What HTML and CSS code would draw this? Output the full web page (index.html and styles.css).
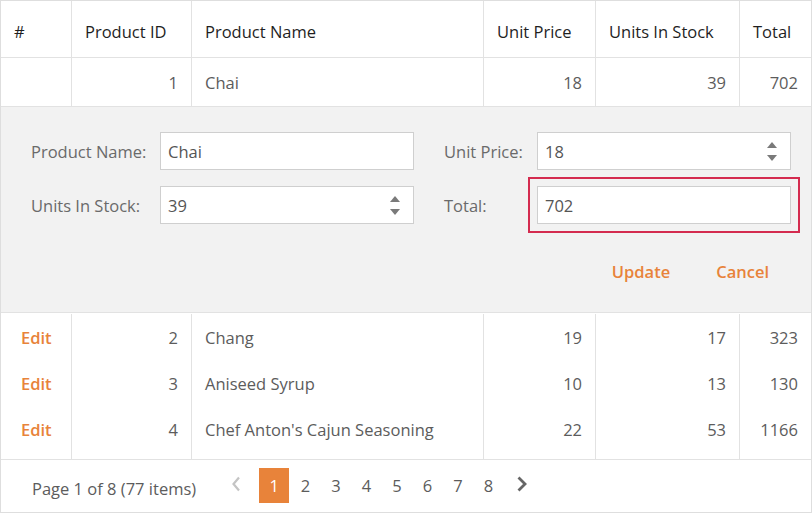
FILE: index.html
```html
<!DOCTYPE html>
<html>
<head>
<meta charset="utf-8">
<link rel="stylesheet" href="styles.css">
</head>
<body>
<div class="grid">
  <div class="row head">
    <div class="cell">#</div>
    <div class="cell">Product ID</div>
    <div class="cell">Product Name</div>
    <div class="cell">Unit Price</div>
    <div class="cell">Units In Stock</div>
    <div class="cell">Total</div>
  </div>
  <div class="row data first">
    <div class="cell"></div>
    <div class="cell num">1</div>
    <div class="cell">Chai</div>
    <div class="cell num">18</div>
    <div class="cell num">39</div>
    <div class="cell num">702</div>
  </div>
  <div class="form">
    <div class="fields">
      <label class="lbl">Product Name:</label>
      <div class="input"><span>Chai</span></div>
      <label class="lbl right">Unit Price:</label>
      <div class="input"><span>18</span><span class="spin"><i class="up"></i><i class="down"></i></span></div>
      <label class="lbl">Units In Stock:</label>
      <div class="input"><span>39</span><span class="spin"><i class="up"></i><i class="down"></i></span></div>
      <label class="lbl right">Total:</label>
      <div class="input focused"><span>702</span></div>
    </div>
    <div class="actions">
      <a class="link">Update</a>
      <a class="link">Cancel</a>
    </div>
  </div>
  <div class="rows">
    <div class="row data">
      <div class="cell"><a class="link">Edit</a></div>
      <div class="cell num">2</div>
      <div class="cell">Chang</div>
      <div class="cell num">19</div>
      <div class="cell num">17</div>
      <div class="cell num">323</div>
    </div>
    <div class="row data">
      <div class="cell"><a class="link">Edit</a></div>
      <div class="cell num">3</div>
      <div class="cell">Aniseed Syrup</div>
      <div class="cell num">10</div>
      <div class="cell num">13</div>
      <div class="cell num">130</div>
    </div>
    <div class="row data last">
      <div class="cell"><a class="link">Edit</a></div>
      <div class="cell num">4</div>
      <div class="cell">Chef Anton's Cajun Seasoning</div>
      <div class="cell num">22</div>
      <div class="cell num">53</div>
      <div class="cell num">1166</div>
    </div>
  </div>
  <div class="pager">
    <span class="info">Page 1 of 8 (77 items)</span>
    <span class="nav prev"><svg width="10" height="16" viewBox="0 0 10 16"><path d="M8 1.5 L2.5 8 L8 14.5" fill="none" stroke="#c4c4c4" stroke-width="2.2"/></svg></span>
    <span class="page current">1</span>
    <span class="page">2</span>
    <span class="page">3</span>
    <span class="page">4</span>
    <span class="page">5</span>
    <span class="page">6</span>
    <span class="page">7</span>
    <span class="page">8</span>
    <span class="nav next"><svg width="12" height="16" viewBox="0 0 12 16"><path d="M2.5 1.5 L9 8 L2.5 14.5" fill="none" stroke="#666" stroke-width="2.8"/></svg></span>
  </div>
</div>
</body>
</html>
```

FILE: styles.css
```css
* { box-sizing: border-box; }
html, body { margin: 0; padding: 0; background: #fff; }
body {
  font-family: "Open Sans", "Noto Sans", sans-serif;
  font-size: 16.5px;
  color: #5c5c5c;
}
.grid {
  width: 812px;
  border: 1px solid #dedede;
}
.row {
  display: grid;
  grid-template-columns: 70px 120px 292px 112px 144px 1fr;
}
.cell {
  display: flex;
  align-items: center;
  padding: 0 13px;
  border-left: 1px solid #e2e2e2;
  white-space: nowrap;
}
.cell:first-child { border-left: none; }
.head {
  height: 57px;
  border-bottom: 1px solid #e2e2e2;
}
.head .cell {
  color: #1f1f1f;
  padding-top: 4px;
}
.data.first {
  height: 48px;
}
.data.first .cell { padding-top: 1px; }
.num { justify-content: flex-end; }
.form {
  background: #f2f2f2;
  border-top: 1px solid #e2e2e2;
  border-bottom: 1px solid #e2e2e2;
  height: 207px;
  padding: 25px 20px 0 30px;
}
.fields {
  display: grid;
  grid-template-columns: 129px 254px 123px 254px;
  row-gap: 16px;
  align-items: center;
}
.lbl { color: #6a6a6a; }
.lbl.right { padding-left: 30px; }
.input {
  height: 38px;
  background: #fff;
  border: 1px solid #cfcfcf;
  display: flex;
  align-items: center;
  justify-content: space-between;
  padding: 0 13px 0 7px;
  color: #555;
}
.input.focused {
  outline: 2px solid #d42b4f;
  outline-offset: 7px;
}
.spin {
  display: flex;
  flex-direction: column;
  gap: 7px;
  align-items: center;
}
.spin i {
  display: block;
  width: 0;
  height: 0;
  border-left: 5px solid transparent;
  border-right: 5px solid transparent;
}
.spin .up { border-bottom: 6px solid #7a7a7a; }
.spin .down { border-top: 6px solid #7a7a7a; }
.actions {
  display: flex;
  justify-content: flex-end;
  gap: 46px;
  padding: 36px 22px 0 0;
}
.link {
  color: #e8833a;
  font-weight: 600;
  text-decoration: none;
}
.rows {
  padding-top: 1px;
}
.rows .data { height: 46px; }
.rows .data.last { height: 53px; }
.rows .data.last .cell { padding-bottom: 7px; }
.rows .data .cell { padding-top: 1px; }
.rows .data .cell:first-child { padding-left: 20px; }
.pager {
  border-top: 1px solid #e2e2e2;
  height: 53px;
  display: flex;
  align-items: center;
  padding: 0 0 0 31px;
}
.info { color: #5c5c5c; margin-top: 4px; margin-right: 35px; }
.nav { display: flex; align-items: center; margin-top: -4px; }
.prev { margin-right: 18px; }
.next { margin-left: 12px; }
.page {
  width: 30.5px;
  height: 35px;
  display: flex;
  align-items: center;
  justify-content: center;
  color: #5c5c5c;
  margin-top: -1px;
}
.page.current {
  width: 30px;
  background: #e8833a;
  color: #fff;
  margin-right: 1px;
}
```
